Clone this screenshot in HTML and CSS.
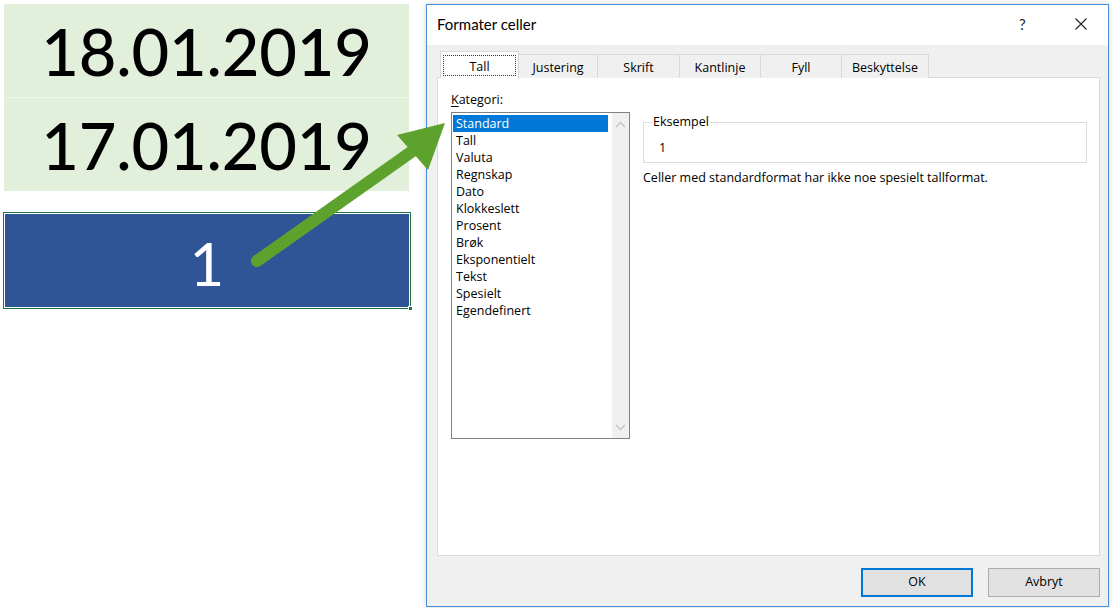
FILE: index.html
```html
<!DOCTYPE html>
<html lang="no">
<head>
<meta charset="utf-8">
<title>Formater celler</title>
<link rel="stylesheet" href="styles.css">
</head>
<body>
<div class="page">
  <div class="sheet">
    <div class="dates">
      <div class="date-cell first">18.01.2019</div>
      <div class="date-cell">17.01.2019</div>
    </div>
    <div class="num-cell"><span>1</span><i class="handle"></i></div>
  </div>

  <div class="dialog">
    <div class="titlebar">
      <span class="title">Formater celler</span>
      <span class="help">?</span>
      <span class="close"><svg width="14" height="14" viewBox="0 0 14 14"><path d="M1.5 1.5 L12.5 12.5 M12.5 1.5 L1.5 12.5" stroke="#222" stroke-width="1.1" fill="none"/></svg></span>
    </div>
    <div class="body">
      <div class="tabs">
        <div class="tab active"><span class="focus">Tall</span></div>
        <div class="tab w79">Justering</div>
        <div class="tab w82">Skrift</div>
        <div class="tab w81">Kantlinje</div>
        <div class="tab w81">Fyll</div>
        <div class="tab w87">Beskyttelse</div>
      </div>
      <div class="panel">
        <div class="left-col">
          <div class="label"><u>K</u>ategori:</div>
          <div class="listbox">
            <ul class="items">
              <li class="sel">Standard</li>
              <li>Tall</li>
              <li>Valuta</li>
              <li>Regnskap</li>
              <li>Dato</li>
              <li>Klokkeslett</li>
              <li>Prosent</li>
              <li>Brøk</li>
              <li>Eksponentielt</li>
              <li>Tekst</li>
              <li>Spesielt</li>
              <li>Egendefinert</li>
            </ul>
            <div class="scrollbar">
              <svg width="11" height="7" viewBox="0 0 11 7"><polyline points="1,6 5.5,1.5 10,6" stroke="#c4c4c4" stroke-width="1.3" fill="none"/></svg>
              <svg width="11" height="7" viewBox="0 0 11 7"><polyline points="1,1 5.5,5.5 10,1" stroke="#c4c4c4" stroke-width="1.3" fill="none"/></svg>
            </div>
          </div>
        </div>
        <div class="right-col">
          <fieldset class="group">
            <legend>Eksempel</legend>
            <div class="sample">1</div>
          </fieldset>
          <p class="desc">Celler med standardformat har ikke noe spesielt tallformat.</p>
        </div>
      </div>
      <div class="footer">
        <button class="btn default">OK</button>
        <button class="btn">Avbryt</button>
      </div>
    </div>
  </div>
</div>

<svg class="arrow" width="1112" height="608" viewBox="0 0 1112 608">
  <line x1="257" y1="261" x2="414" y2="150" stroke="#5ea22e" stroke-width="12" stroke-linecap="round"/>
  <polygon points="445,123 397,135 428,170" fill="#5ea22e"/>
</svg>
</body>
</html>
```

FILE: styles.css
```css
* { box-sizing: border-box; }

html, body {
  margin: 0;
  padding: 0;
  background: #fff;
}

body {
  width: 1112px;
  height: 608px;
  overflow: hidden;
  position: relative;
  font-family: "Open Sans", "Noto Sans", sans-serif;
  font-size: 12.5px;
  color: #000;
}

.page {
  display: flex;
  align-items: flex-start;
}

/* ---------- spreadsheet ---------- */
.sheet {
  width: 426px;
  padding-top: 4px;
  flex: none;
}

.dates {
  margin-left: 4px;
  width: 405px;
  background: #e2efda;
}

.date-cell {
  height: 93px;
  display: flex;
  align-items: center;
  justify-content: center;
  font-family: Lato, sans-serif;
  font-weight: 500;
  font-size: 65px;
  letter-spacing: -0.2px;
  line-height: 1;
  color: #000;
  padding-top: 2px;
}

.date-cell.first {
  height: 94px;
  border-bottom: 1px solid #eef5e9;
}

.num-cell {
  position: relative;
  margin-top: 21px;
  margin-left: 3px;
  width: 408px;
  height: 97px;
  border: 1px solid #217346;
  box-shadow: inset 0 0 0 1px #fff;
  background: #2f5597;
  display: flex;
  align-items: center;
  justify-content: center;
  padding-top: 5px;
  color: #fff;
  font-family: Lato, sans-serif;
  font-size: 60px;
  line-height: 1;
}

.handle {
  position: absolute;
  right: -3px;
  bottom: -3px;
  width: 5px;
  height: 5px;
  background: #217346;
  border: 1px solid #fff;
}

/* ---------- dialog ---------- */
.dialog {
  margin-top: 4px;
  width: 683px;
  height: 603px;
  border: 1px solid #4590d8;
  background: #f0f0f0;
  display: flex;
  flex-direction: column;
  box-shadow: 0 0 6px rgba(0, 0, 0, 0.18);
  flex: none;
}

.titlebar {
  height: 40px;
  background: #fff;
  display: flex;
  align-items: center;
  padding-left: 10px;
  flex: none;
}

.title {
  font-family: Lato, sans-serif;
  font-size: 15px;
  flex: 1;
  padding-bottom: 2px;
}

.help {
  font-family: Lato, sans-serif;
  font-size: 15px;
  color: #222;
  width: 55px;
  padding-bottom: 2px;
}

.close {
  width: 14px;
  display: flex;
  padding-bottom: 2px;
  margin-right: 20px;
}

.body {
  flex: 1;
  display: flex;
  flex-direction: column;
  padding: 6px 8px 0 10px;
}

.tabs {
  display: flex;
  height: 27px;
  margin-left: 3px;
  position: relative;
  z-index: 2;
  align-items: flex-end;
}

.tab {
  height: 24px;
  border: 1px solid #d9d9d9;
  border-bottom: none;
  border-left: none;
  background: #f0f0f0;
  display: flex;
  align-items: center;
  justify-content: center;
  padding-top: 1px;
  color: #000;
}

.tab.active {
  width: 79px;
  height: 27px;
  background: #fff;
  border-left: 1px solid #d9d9d9;
  padding: 3px 2px 2px 2px;
}

.tab .focus {
  display: flex;
  align-items: center;
  justify-content: center;
  width: 100%;
  height: 100%;
  border: 1px dotted #333;
  padding-top: 1px;
}

.w79 { width: 79px; }
.w81 { width: 81px; }
.w82 { width: 82px; }
.w87 { width: 87px; }

.panel {
  flex: 1;
  margin-top: -1px;
  background: #fff;
  border: 1px solid #d9d9d9;
  display: flex;
  padding: 13px 12px 0 13px;
}

.left-col {
  width: 179px;
  flex: none;
}

.label {
  height: 21px;
  line-height: 17px;
  color: #000;
}

.label u {
  text-decoration-thickness: 1px;
  text-underline-offset: 2px;
}

.listbox {
  height: 327px;
  border: 1px solid #828282;
  display: flex;
}

.items {
  list-style: none;
  margin: 0;
  padding: 2px 4px 0 1px;
  flex: 1;
}

.items li {
  height: 17px;
  line-height: 17px;
  padding-left: 3px;
  white-space: nowrap;
}

.items li.sel {
  background: #0078d7;
  color: #fff;
}

.scrollbar {
  width: 17px;
  background: #f0f0f0;
  display: flex;
  flex-direction: column;
  justify-content: space-between;
  align-items: center;
  padding: 8px 0 7px;
}

.right-col {
  flex: 1;
  margin-left: 13px;
  padding-top: 31px;
}

.group {
  margin: 0;
  height: 41px;
  border: 1px solid #dcdcdc;
  padding: 0 0 0 15px;
  position: relative;
}

.group legend {
  position: absolute;
  top: -10px;
  left: 8px;
  padding: 0 1px;
  background: #fff;
  line-height: 17px;
}

.sample {
  line-height: 17px;
  padding-top: 16px;
}

.desc {
  margin: 6px 0 0;
  line-height: 17px;
}

.footer {
  height: 50px;
  display: flex;
  justify-content: flex-end;
  align-items: flex-start;
  padding-top: 12px;
  gap: 15px;
}

.btn {
  width: 112px;
  height: 29px;
  background: #e1e1e1;
  border: 1px solid #adadad;
  font-family: "Open Sans", "Noto Sans", sans-serif;
  font-size: 12.5px;
  color: #000;
  padding: 0 0 2px;
}

.btn.default {
  border: 2px solid #0078d7;
}

.arrow {
  position: absolute;
  left: 0;
  top: 0;
  pointer-events: none;
}
```
